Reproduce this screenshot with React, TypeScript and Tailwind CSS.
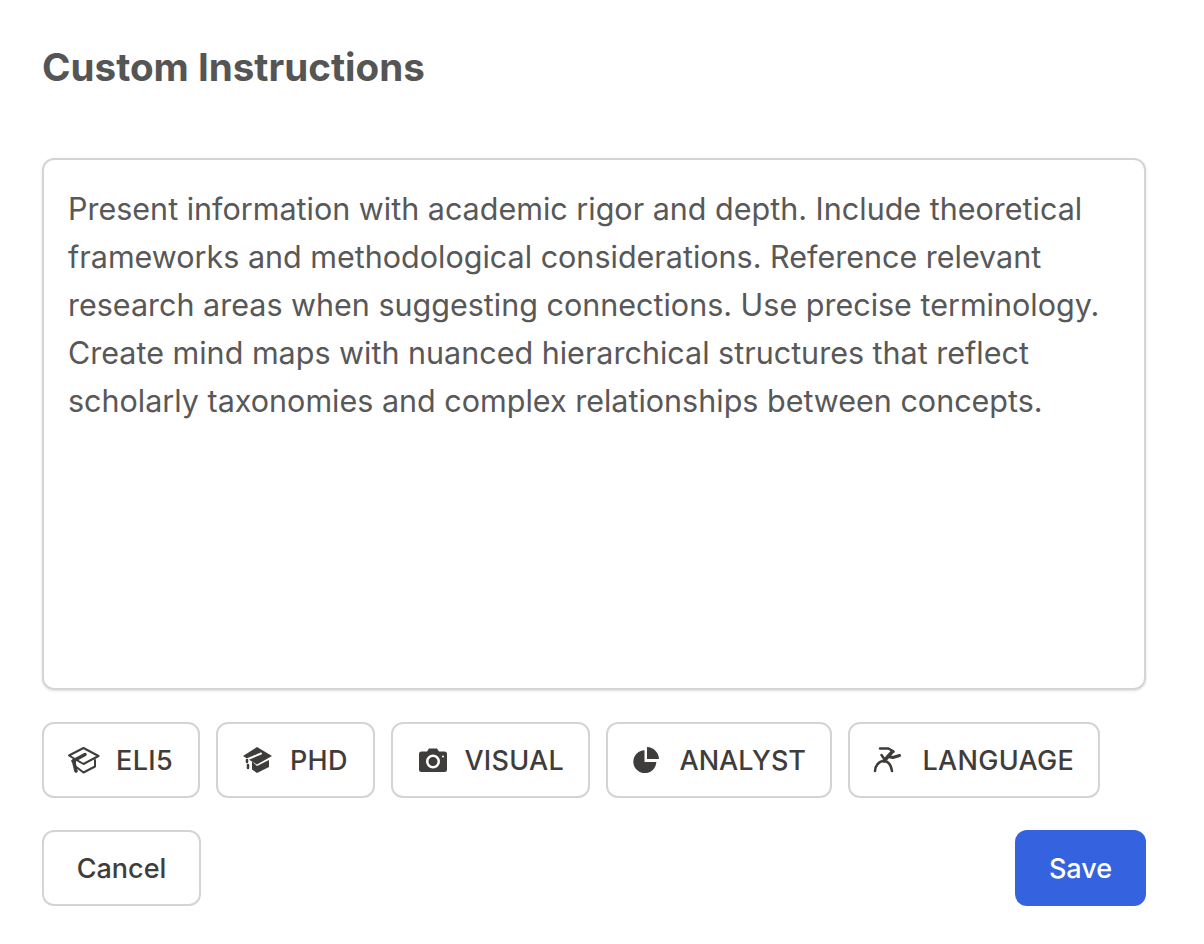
import React from "react";

const INK = "#3f3d3b";

const Cap = () => (
  <svg width="32" height="27" viewBox="0 0 32 27" fill="none" stroke={INK} strokeWidth="2" strokeLinejoin="round" strokeLinecap="round">
    <path d="M15.500 1 30.500 9 15.500 17 1 8.500Z" />
    <path d="M7 14v5l8.500 6.500L27 19.500V13" />
    <path strokeWidth="3.500" d="M5 14 17 7.500" />
    <path strokeWidth="3.500" d="M5.500 14l2.500 10" />
  </svg>
);
const CapSolid = () => (
  <svg width="30" height="26" viewBox="0 0 30 26">
    <path fill={INK} d="M14 0 29 9 14 17.500 0 9Z" />
    <path fill="none" stroke="#fff" strokeWidth="2" strokeLinecap="round" d="M5 12 18 6.500" />
    <path fill={INK} d="M9 14.500 14 19l12-6v7L14 26l-5-3.500Z" />
    <path fill="none" stroke={INK} strokeWidth="2.500" strokeLinecap="round" d="M4 13v2M5 18v3" />
  </svg>
);
const Camera = () => (
  <svg width="28" height="24" viewBox="0 0 28 24">
    <path fill={INK} fillRule="evenodd" d="M2.500 3.500H8L10 .5h8l2 3h5.500A2.500 2.500 0 0 1 28 6v15.500a2.500 2.500 0 0 1-2.500 2.500h-23A2.500 2.500 0 0 1 0 21.500V6a2.500 2.500 0 0 1 2.500-2.500ZM14 6.500a7 7 0 1 0 0 14 7 7 0 0 0 0-14Zm0 2.500a4.500 4.500 0 1 1 0 9 4.500 4.500 0 0 1 0-9ZM24 7.500a1 1 0 1 0 0 2 1 1 0 0 0 0-2Z" />
  </svg>
);
const Pie = () => (
  <svg width="26" height="26" viewBox="0 0 26 26" fill={INK}>
    <path d="M11.500 3.200v11.800h11.800A11.500 11.500 0 1 1 11.500 3.200Z" />
    <path d="M14 0a12.500 12.500 0 0 1 12 12H14Z" />
  </svg>
);
const Runner = () => (
  <svg className="-ml-1.5" width="28" height="26" viewBox="0 0 28 26" fill="none" stroke={INK} strokeLinecap="round" strokeLinejoin="round">
    <path strokeWidth="2.500" d="M7 1.500h8.500L20.500 4.500" />
    <path strokeWidth="3.500" d="M19.500 4.500 11 14" />
    <path strokeWidth="3" d="M15 9.500 20 10.500 26.500 8.500" />
    <path strokeWidth="2.500" d="M8.500 8l3.500 5" />
    <path strokeWidth="2.500" d="M2 24c0-5 4-10 8.500-10 4.500 0 7.500 4 8.500 10" />
  </svg>
);

function Chip({ icon, label, w, text }: { icon: React.ReactNode; label: string; w: string; text: string }) {
  return (
    <button className={`flex h-[76px] items-center justify-start rounded-xl border-2 border-[#d4d4d4] bg-white px-6 text-[27px] font-medium text-[#3f3d3b] ${w} ${text}`}>
      <span className="flex w-8 justify-center">{icon}</span>
      <span className="pt-[2px]">{label}</span>
    </button>
  );
}

export default function App() {
  return (
    <div className="min-h-[944px] w-[1204px] bg-white pl-[42px] pr-[58px] pt-[42px] font-['Inter',sans-serif]">
      <h1 className="text-[38.600px] font-bold leading-[50px] text-[#555555]">Custom Instructions</h1>
      <div className="mt-[66px] h-[532px] rounded-xl border-2 border-[#d4d4d4] px-6 pt-[25px] text-[30.500px] leading-[48px] text-[#585858] shadow-sm">
        Present information with academic rigor and depth. Include theoretical frameworks and methodological considerations. Reference relevant research areas when suggesting connections. Use precise terminology. Create mind maps with nuanced hierarchical structures that reflect scholarly taxonomies and complex relationships between concepts.
      </div>
      <div className="mt-8 flex gap-4">
        <Chip icon={<Cap />} label="ELI5" w="w-[158px]" text="gap-4 tracking-[0.4px]" />
        <Chip icon={<CapSolid />} label="PHD" w="w-[159px]" text="gap-4 tracking-[0.3px]" />
        <Chip icon={<Camera />} label="VISUAL" w="w-[199px]" text="gap-4 tracking-[0.3px]" />
        <Chip icon={<Pie />} label="ANALYST" w="w-[226px]" text="gap-[19px] tracking-normal" />
        <Chip icon={<Runner />} label="LANGUAGE" w="w-[252px]" text="gap-[17px] tracking-[0.3px]" />
      </div>
      <div className="mt-8 flex justify-between">
        <button className="h-[76px] w-[159px] rounded-xl border-2 border-[#d4d4d4] bg-white pt-[2px] text-[27px] font-medium text-[#3f3d3b]">Cancel</button>
        <button className="h-[76px] w-[131px] rounded-xl bg-[#3563e0] pt-[2px] text-[27px] font-medium text-white">Save</button>
      </div>
    </div>
  );
}
